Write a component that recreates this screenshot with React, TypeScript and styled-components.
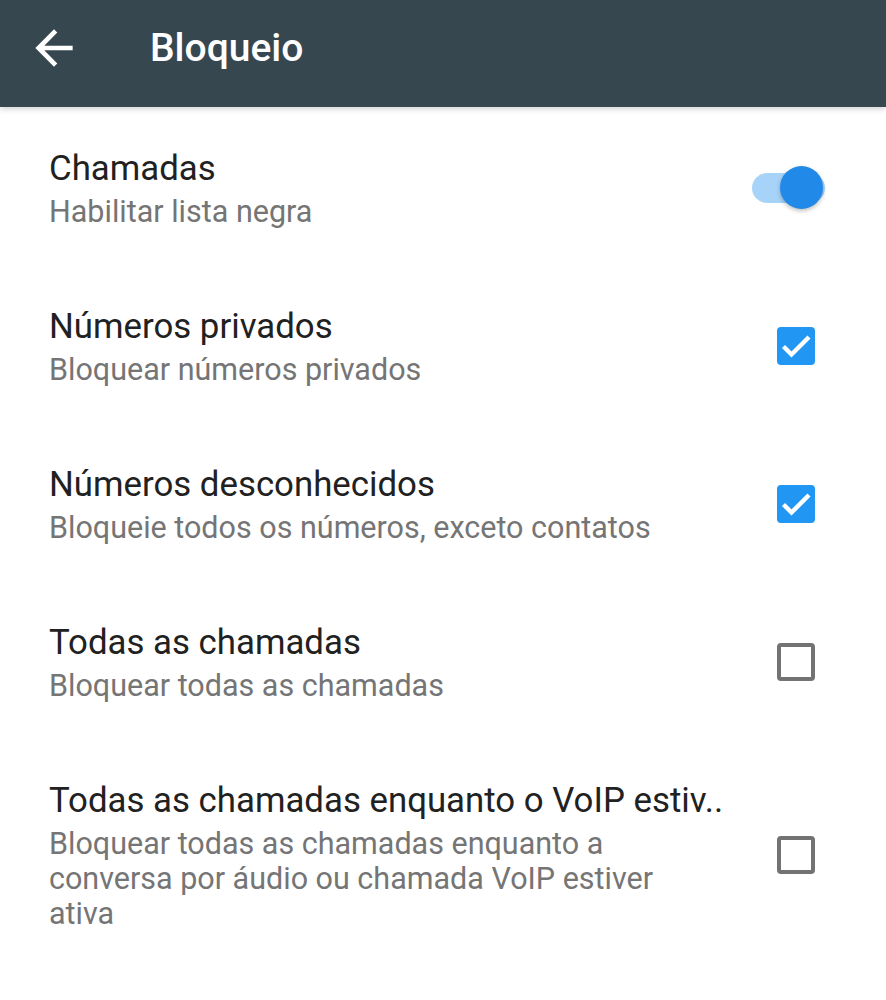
import React from "react";
import styled, { createGlobalStyle } from "styled-components";

const GlobalStyle = createGlobalStyle`
  html, body {
    margin: 0;
    padding: 0;
    background: #ffffff;
    font-family: Roboto, "Noto Sans", sans-serif;
  }
`;

type Setting = {
  title: string;
  subtitle: React.ReactNode;
  control: "switch" | "checkbox";
  checked: boolean;
};

const settings: Setting[] = [
  { title: "Chamadas", subtitle: "Habilitar lista negra", control: "switch", checked: true },
  { title: "Números privados", subtitle: "Bloquear números privados", control: "checkbox", checked: true },
  {
    title: "Números desconhecidos",
    subtitle: "Bloqueie todos os números, exceto contatos",
    control: "checkbox",
    checked: true,
  },
  { title: "Todas as chamadas", subtitle: "Bloquear todas as chamadas", control: "checkbox", checked: false },
  {
    title: "Todas as chamadas enquanto o VoIP estiv..",
    subtitle: (
      <>
        Bloquear todas as chamadas enquanto a
        <br />
        conversa por áudio ou chamada VoIP estiver
        <br />
        ativa
      </>
    ),
    control: "checkbox",
    checked: false,
  },
];

export default function App() {
  return (
    <>
      <GlobalStyle />
      <Page>
        <Toolbar>
          <BackButton aria-label="Voltar">
            <svg width="56" height="56" viewBox="0 0 24 24">
              <path
                fill="#ffffff"
                d="M20 11H7.83l5.59-5.59L12 4l-8 8 8 8 1.41-1.41L7.83 13H20v-2z"
              />
            </svg>
          </BackButton>
          <ToolbarTitle>Bloqueio</ToolbarTitle>
        </Toolbar>
        <List>
          {settings.map((s) => (
            <Row key={s.title}>
              <TextBlock>
                <Title>{s.title}</Title>
                <Subtitle>{s.subtitle}</Subtitle>
              </TextBlock>
              {s.control === "switch" ? (
                <Switch $on={s.checked}>
                  <Thumb />
                </Switch>
              ) : (
                <Checkbox $checked={s.checked}>
                  {s.checked && (
                    <svg width="38" height="38" viewBox="0 0 38 38">
                      <polyline
                        points="6.5,19.5 14.5,27.5 32,10"
                        fill="none"
                        stroke="#ffffff"
                        strokeWidth="4.4"
                      />
                    </svg>
                  )}
                </Checkbox>
              )}
            </Row>
          ))}
        </List>
      </Page>
    </>
  );
}

const Page = styled.div`
  width: 886px;
  min-height: 1000px;
  background: #ffffff;
`;

const Toolbar = styled.header`
  position: relative;
  height: 107px;
  background: #37474f;
  display: flex;
  align-items: flex-start;
  box-shadow: 0 2px 6px rgba(0, 0, 0, 0.18);
  z-index: 1;
`;

const BackButton = styled.div`
  width: 56px;
  height: 96px;
  margin-left: 26px;
  display: flex;
  align-items: center;
  justify-content: center;
`;

const ToolbarTitle = styled.h1`
  margin: 0 0 0 68px;
  height: 96px;
  line-height: 96px;
  font-size: 39px;
  font-weight: 500;
  color: #ffffff;
`;

const List = styled.div`
  display: flex;
  flex-direction: column;
  padding-top: 1px;
`;

const Row = styled.div`
  display: flex;
  align-items: center;
  justify-content: space-between;
  padding: 38px 61px 37px 49px;
`;

const TextBlock = styled.div`
  display: flex;
  flex-direction: column;
  min-width: 0;
`;

const Title = styled.div`
  font-size: 34.8px;
  line-height: 44px;
  color: #212121;
  white-space: nowrap;
`;

const Subtitle = styled.div`
  margin-top: 4px;
  font-size: 30.5px;
  line-height: 35px;
  color: #757575;
`;

const Switch = styled.div<{ $on: boolean }>`
  position: relative;
  width: 73px;
  height: 30px;
  border-radius: 15px;
  background: ${({ $on }) => ($on ? "#a8d3f9" : "#bdbdbd")};
  flex-shrink: 0;
`;

const Thumb = styled.span`
  position: absolute;
  top: -7px;
  right: 2px;
  width: 43px;
  height: 43px;
  border-radius: 50%;
  background: #218ae8;
  box-shadow: 0 2px 4px rgba(0, 0, 0, 0.25);
`;

const Checkbox = styled.div<{ $checked: boolean }>`
  box-sizing: border-box;
  width: 38px;
  height: 38px;
  margin-right: 10px;
  border-radius: 4px;
  flex-shrink: 0;
  display: flex;
  background: ${({ $checked }) => ($checked ? "#2196f3" : "transparent")};
  border: ${({ $checked }) => ($checked ? "none" : "4px solid #737373")};
`;
